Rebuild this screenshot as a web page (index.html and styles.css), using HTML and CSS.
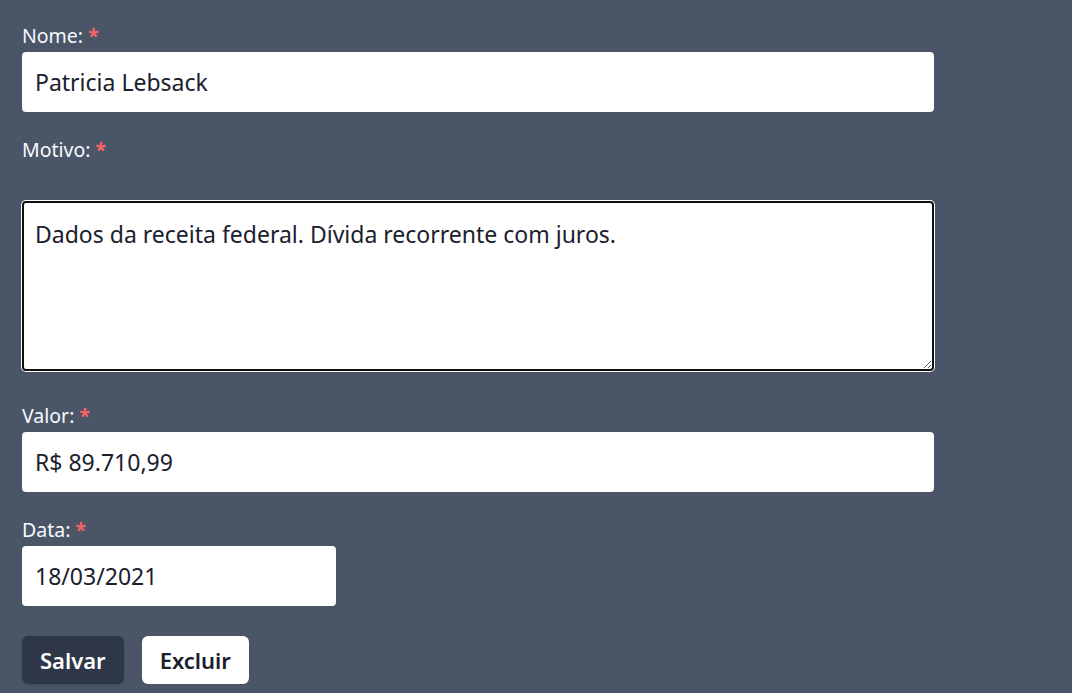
FILE: index.html
```html
<!DOCTYPE html>
<html lang="pt-BR">
<head>
<meta charset="utf-8">
<title>Dívida</title>
<link rel="stylesheet" href="styles.css">
</head>
<body>
<form class="form">
  <div class="field">
    <label class="label" for="nome">Nome: <span class="req">*</span></label>
    <input class="input" id="nome" type="text" value="Patricia Lebsack">
  </div>
  <div class="field field-area">
    <label class="label label-area" for="motivo">Motivo: <span class="req">*</span></label>
    <textarea class="textarea" id="motivo">Dados da receita federal. Dívida recorrente com juros.</textarea>
  </div>
  <div class="field">
    <label class="label" for="valor">Valor: <span class="req">*</span></label>
    <input class="input" id="valor" type="text" value="R$ 89.710,99">
  </div>
  <div class="field field-date">
    <label class="label" for="data">Data: <span class="req">*</span></label>
    <input class="input input-date" id="data" type="text" value="18/03/2021">
  </div>
  <div class="actions">
    <button class="btn btn-dark" type="button">Salvar</button>
    <button class="btn btn-light" type="button">Excluir</button>
  </div>
</form>
</body>
</html>
```
FILE: styles.css
```css
* { box-sizing: border-box; }
html, body { margin: 0; height: 100%; }
body {
  background: #4a5568;
  font-family: "Noto Sans", "Open Sans", sans-serif;
  overflow: hidden;
}
.form {
  width: 956px;
  padding: 24px 22px;
}
.field { margin-bottom: 26px; }
.field-area { margin-bottom: 33px; }
.field-date { margin-bottom: 30px; }
.label {
  display: block;
  color: #f7fafc;
  font-size: 19.5px;
  line-height: 24px;
  margin-bottom: 4px;
}
.label-area { margin-bottom: 39px; }
.req {
  color: #f56565;
  font-weight: 700;
}
.input {
  display: block;
  width: 100%;
  height: 60px;
  border: 0;
  border-radius: 4px;
  background: #fff;
  padding: 0 13px;
  font-family: inherit;
  font-size: 23px;
  color: #1a202c;
  outline: none;
}
.input-date { width: 314px; }
.textarea {
  display: block;
  width: 100%;
  height: 170px;
  border: 2px solid #101010;
  border-radius: 4px;
  box-shadow: 0 0 0 1px #fff;
  background: #fff;
  padding: 15px 11px;
  font-family: inherit;
  font-size: 23px;
  line-height: 32px;
  color: #1a202c;
  outline: none;
  resize: vertical;
}
.actions {
  display: flex;
  gap: 18px;
}
.btn {
  height: 48px;
  padding: 0 18px;
  border: 0;
  border-radius: 6px;
  font-family: inherit;
  font-size: 22px;
  font-weight: 600;
  cursor: pointer;
}
.btn-dark {
  background: #2d3748;
  color: #fff;
  box-shadow: 0 1px 3px rgba(0,0,0,0.15);
}
.btn-light {
  background: #fff;
  color: #1a202c;
}
```
